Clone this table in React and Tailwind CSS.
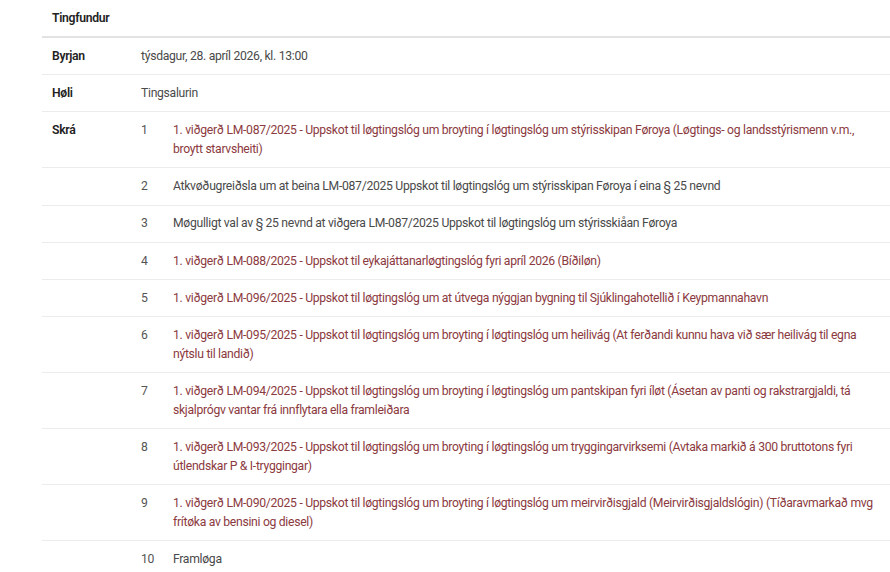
const items = [
  {
    n: 1,
    link: true,
    text: "1. viðgerð LM-087/2025 - Uppskot til løgtingslóg um broyting í løgtingslóg um stýrisskipan Føroya (Løgtings- og landsstýrismenn v.m., broytt starvsheiti)",
  },
  {
    n: 2,
    text: "Atkvøðugreiðsla um at beina LM-087/2025 Uppskot til løgtingslóg um stýrisskipan Føroya í eina § 25 nevnd",
  },
  {
    n: 3,
    text: "Møgulligt val av § 25 nevnd at viðgera LM-087/2025 Uppskot til løgtingslóg um stýrisskiåan Føroya",
  },
  {
    n: 4,
    link: true,
    text: "1. viðgerð LM-088/2025 - Uppskot til eykajáttanarløgtingslóg fyri apríl 2026 (Bíðiløn)",
  },
  {
    n: 5,
    link: true,
    text: "1. viðgerð LM-096/2025 - Uppskot til løgtingslóg um at útvega nýggjan bygning til Sjúklingahotellið í Keypmannahavn",
  },
  {
    n: 6,
    link: true,
    text: "1. viðgerð LM-095/2025 - Uppskot til løgtingslóg um broyting í løgtingslóg um heilivág (At ferðandi kunnu hava við sær heilivág til egna nýtslu til landið)",
  },
  {
    n: 7,
    link: true,
    text: "1. viðgerð LM-094/2025 - Uppskot til løgtingslóg um broyting í løgtingslóg um pantskipan fyri íløt (Ásetan av panti og rakstrargjaldi, tá skjalprógv vantar frá innflytara ella framleiðara",
  },
  {
    n: 8,
    link: true,
    text: "1. viðgerð LM-093/2025 - Uppskot til løgtingslóg um broyting í løgtingslóg um tryggingarvirksemi (Avtaka markið á 300 bruttotons fyri útlendskar P & I-tryggingar)",
  },
  {
    n: 9,
    link: true,
    text: "1. viðgerð LM-090/2025 - Uppskot til løgtingslóg um broyting í løgtingslóg um meirvirðisgjald (Meirvirðisgjaldslógin) (Tíðaravmarkað mvg frítøka av bensini og diesel)",
  },
  { n: 10, text: "Framløga" },
];

const cell = "py-[8.8px] align-top";

export default function App() {
  return (
    <div className="min-h-screen bg-white pl-[42px] font-['Roboto',sans-serif] text-[12.2px] leading-[18.7px] tracking-[-0.3px] text-[#4a4a4a]">
      <table className="w-full table-fixed border-collapse">
        <colgroup>
          <col className="w-[89px]" />
          <col className="w-[32px]" />
          <col />
        </colgroup>
        <thead>
          <tr className="border-b-2 border-[#e2e2e2]">
            <th colSpan={3} className="py-[8.5px] pl-[10px] text-left font-semibold text-[#222]">
              Tingfundur
            </th>
          </tr>
        </thead>
        <tbody>
          <tr className="border-b border-[#ececec]">
            <td className={`${cell} pl-[10px] font-semibold text-[#222]`}>Byrjan</td>
            <td colSpan={2} className={`${cell} pl-[10px]`}>
              týsdagur, 28. apríl 2026, kl. 13:00
            </td>
          </tr>
          <tr className="border-b border-[#ececec]">
            <td className={`${cell} pl-[10px] font-semibold text-[#222]`}>Høli</td>
            <td colSpan={2} className={`${cell} pl-[10px]`}>
              Tingsalurin
            </td>
          </tr>
          {items.map((it, i) => (
            <tr key={it.n} className={i < items.length - 1 ? "border-b border-[#ececec]" : ""}>
              <td className={`${cell} pl-[10px] font-semibold text-[#222]`}>{i === 0 ? "Skrá" : ""}</td>
              <td className={`${cell} pl-[10px] text-[#555]`}>{it.n}</td>
              <td className={`${cell} pl-[10px] pr-[10px] ${it.link ? "text-[#8b3a40]" : ""}`}>
                {it.link ? <a href="#">{it.text}</a> : it.text}
              </td>
            </tr>
          ))}
        </tbody>
      </table>
    </div>
  );
}
